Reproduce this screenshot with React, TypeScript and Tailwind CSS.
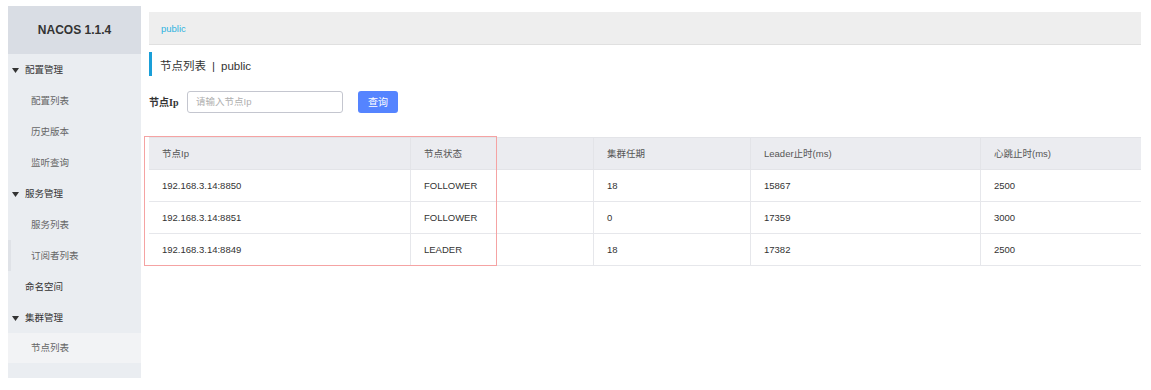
import React from "react";

const font = { fontFamily: '"Liberation Sans", "Noto Sans CJK SC", sans-serif' };

function Tri() {
  return (
    <svg width="7" height="5" viewBox="0 0 7 5" className="mr-[6px]">
      <path d="M0 0 L7 0 L3.5 5 Z" fill="#333" />
    </svg>
  );
}

const rows = [
  ["192.168.3.14:8850", "FOLLOWER", "18", "15867", "2500"],
  ["192.168.3.14:8851", "FOLLOWER", "0", "17359", "3000"],
  ["192.168.3.14:8849", "LEADER", "18", "17382", "2500"],
];

export default function App() {
  return (
    <div className="w-[1151px] h-[390px] bg-white flex pl-[8px] pr-[10px] pt-[6px]" style={font}>
      <aside className="w-[133px] h-[372px] bg-[#eaedf1] flex flex-col shrink-0">
        <div className="h-[48px] shrink-0 bg-[#d9dde4] flex items-center justify-center text-[12px] font-bold text-[#333]">
          NACOS 1.1.4
        </div>
        <div className="h-[31px] flex items-center pt-[2px] pl-[4px] text-[9.5px] text-[#333]"><Tri />配置管理</div>
        <div className="h-[31px] flex items-center pt-[2px] pl-[23px] text-[9.5px] text-[#666]">配置列表</div>
        <div className="h-[31px] flex items-center pt-[2px] pl-[23px] text-[9.5px] text-[#666]">历史版本</div>
        <div className="h-[31px] flex items-center pt-[2px] pl-[23px] text-[9.5px] text-[#666]">监听查询</div>
        <div className="h-[31px] flex items-center pt-[2px] pl-[4px] text-[9.5px] text-[#333]"><Tri />服务管理</div>
        <div className="h-[31px] flex items-center pt-[2px] pl-[23px] text-[9.5px] text-[#666]">服务列表</div>
        <div className="h-[31px] flex items-center pt-[2px] pl-[20px] text-[9.5px] text-[#666] border-l-[3px] border-[#dfe2e7]">
          订阅者列表
        </div>
        <div className="h-[31px] flex items-center pt-[2px] pl-[17px] text-[9.5px] text-[#333]">命名空间</div>
        <div className="h-[31px] flex items-center pt-[2px] pl-[4px] text-[9.5px] text-[#333]"><Tri />集群管理</div>
        <div className="h-[30px] flex items-center pt-[1px] pl-[23px] text-[9.5px] text-[#666] bg-[#f2f3f5]">节点列表</div>
      </aside>
      <main className="flex-1 ml-[8px] pt-[6px] flex flex-col">
        <div className="h-[33px] bg-[#eeeeee] border-b border-[#e0e0e0] flex items-center pl-[12px] pt-[3px] text-[9.5px] text-[#2fb3e0]">
          public
        </div>
        <div className="mt-[7px] h-[24px] border-l-[3px] border-[#1a9fd8] flex items-center pl-[8px] pt-[6px] text-[11.5px] text-[#333]">
          节点列表<span className="mx-[6px]">|</span>public
        </div>
        <div className="mt-[15px] flex items-center h-[22px]">
          <span className="text-[10px] font-bold text-[#333] w-[38px]" style={{ fontFamily: '"Liberation Serif", "Noto Sans CJK SC", serif' }}>节点Ip</span>
          <div className="w-[156px] h-[22px] border border-[#c4c6cf] rounded-[3px] flex items-center pl-[8px] text-[9.5px] text-[#b0b0b0]">
            请输入节点Ip
          </div>
          <div className="ml-[15px] w-[40px] h-[22px] rounded-[3px] bg-[#5584ff] text-white text-[10px] flex items-center justify-center">
            查询
          </div>
        </div>
        <div className="mt-[24px] relative">
          <div className="grid grid-cols-[261px_183px_157px_230px_1fr] text-[9.5px] text-[#333]">
            {["节点Ip", "节点状态", "集群任期", "Leader止时(ms)", "心跳止时(ms)"].map((h, i) => (
              <div key={h} className={`h-[33px] bg-[#ebecf0] border-t border-b border-[#e3e4e8] flex items-center pl-[13px] pt-[1px] text-[#555] ${i > 0 ? "border-l" : ""}`}>
                {h}
              </div>
            ))}
            {rows.map((r, ri) =>
              r.map((c, i) => (
                <div key={ri + "-" + i} className={`h-[32px] border-b border-[#e6e7eb] flex items-center pl-[13px] pt-[2px] ${i > 0 ? "border-l" : ""}`}>
                  {c}
                </div>
              ))
            )}
          </div>
          <div className="absolute left-[-5px] top-[-1px] w-[353px] h-[130px] border border-[#f5a3a3] pointer-events-none" />
        </div>
      </main>
    </div>
  );
}
